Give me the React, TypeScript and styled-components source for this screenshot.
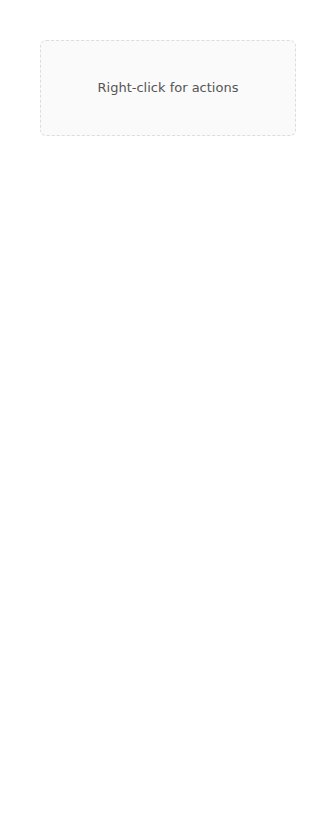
import styled, { createGlobalStyle } from "styled-components";

const GlobalStyle = createGlobalStyle`
  html, body {
    margin: 0;
    padding: 0;
    background: #ffffff;
    font-family: "DejaVu Sans", sans-serif;
  }
`;

const Page = styled.div`
  padding: 40px;
`;

const Target = styled.div`
  padding: 39px 16px 40px;
  line-height: 15px;
  text-align: center;
  border: 1px dashed #dddddd;
  border-radius: 6px;
  background: #fafafa;
  color: #555555;
  font-size: 13px;
  user-select: none;
`;

const App = () => {
  return (
    <Page>
      <GlobalStyle />
      <Target onContextMenu={(e) => e.preventDefault()}>
        Right-click for actions
      </Target>
    </Page>
  );
};

export default App;
